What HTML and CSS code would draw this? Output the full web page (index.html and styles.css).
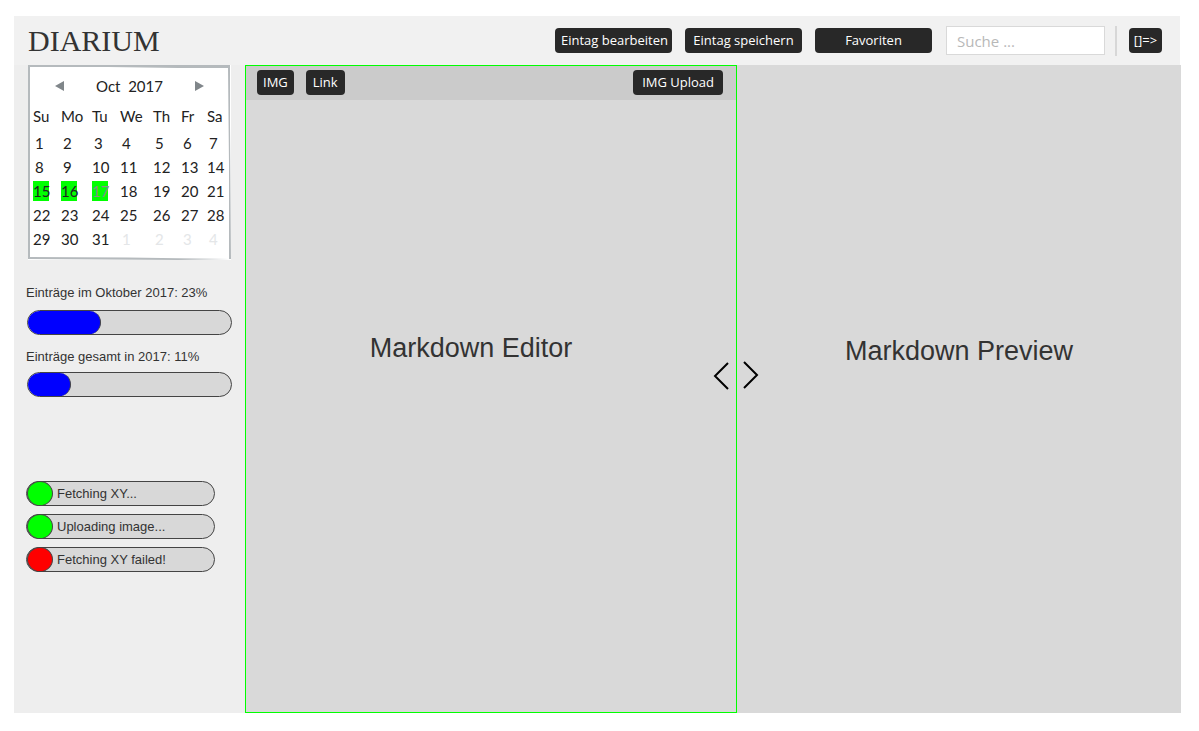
FILE: index.html
```html
<!DOCTYPE html>
<html lang="de">
<head>
<meta charset="utf-8">
<meta name="viewport" content="width=device-width, initial-scale=1">
<title>Diarium</title>
<link rel="stylesheet" href="styles.css">
</head>
<body>
<div class="app">
  <header class="topbar">
    <h1 class="logo">DIARIUM</h1>
    <nav class="actions">
      <button class="btn btn-wide" type="button">Eintag bearbeiten</button>
      <button class="btn btn-wide" type="button">Eintag speichern</button>
      <button class="btn btn-wide" type="button">Favoriten</button>
    </nav>
    <input class="search" type="search" placeholder="Suche ..." aria-label="Suche">
    <span class="divider"></span>
    <button class="btn logout" type="button" aria-label="Abmelden">[]=&gt;</button>
  </header>
  <div class="main">
    <aside class="sidebar">
      <section class="calendar">
        <div class="month">
          <button class="arrow" type="button" aria-label="Voriger Monat"><svg width="9" height="10" viewBox="0 0 9 10"><path d="M9 0V10L0 5Z"/></svg></button>
          <span class="month-name">Oct&nbsp; 2017</span>
          <button class="arrow" type="button" aria-label="Nächster Monat"><svg width="9" height="10" viewBox="0 0 9 10"><path d="M0 0V10L9 5Z"/></svg></button>
        </div>
        <table class="days">
          <colgroup><col class="c28"><col class="c31"><col class="c28"><col class="c33"><col class="c28"><col class="c26"><col></colgroup>
          <thead><tr><th>Su</th><th>Mo</th><th>Tu</th><th>We</th><th>Th</th><th>Fr</th><th>Sa</th></tr></thead>
          <tbody>
            <tr class="single"><td>1</td><td>2</td><td>3</td><td>4</td><td>5</td><td>6</td><td>7</td></tr>
            <tr><td class="one">8</td><td class="one">9</td><td>10</td><td>11</td><td>12</td><td>13</td><td>14</td></tr>
            <tr><td><span class="mark">15</span></td><td><span class="mark">16</span></td><td><span class="mark today">17</span></td><td>18</td><td>19</td><td>20</td><td>21</td></tr>
            <tr><td>22</td><td>23</td><td>24</td><td>25</td><td>26</td><td>27</td><td>28</td></tr>
            <tr><td>29</td><td>30</td><td>31</td><td class="one out">1</td><td class="one out">2</td><td class="one out">3</td><td class="one out">4</td></tr>
          </tbody>
        </table>
        <svg class="frame" viewBox="0 0 203 195" preserveAspectRatio="none" aria-hidden="true">
          <path d="M0 0H202V60L203 194L150 195L0 194ZM2 2V192L100 192.500L201 194L201 100L200 3L150 3L80 2Z" fill-rule="evenodd"/>
        </svg>
      </section>
      <section class="stats">
        <div class="stat">
          <span class="stat-label">Einträge im Oktober 2017: 23%</span>
          <div class="track"><div class="fill" style="width:36%"></div></div>
        </div>
        <div class="stat">
          <span class="stat-label">Einträge gesamt in 2017: 11%</span>
          <div class="track"><div class="fill" style="width:21%"></div></div>
        </div>
      </section>
      <ul class="jobs">
        <li class="job"><span class="dot"></span>Fetching XY...</li>
        <li class="job"><span class="dot"></span>Uploading image...</li>
        <li class="job"><span class="dot failed"></span>Fetching XY failed!</li>
      </ul>
    </aside>
    <section class="editor">
      <div class="tools">
        <button class="btn" type="button">IMG</button>
        <button class="btn link" type="button">Link</button>
        <button class="btn upload" type="button">IMG Upload</button>
      </div>
      <h2 class="title">Markdown Editor</h2>
      <button class="resize left" type="button" aria-label="Editor verkleinern"><svg width="16" height="28" viewBox="0 0 16 28"><path d="M15 1L2 14L15 27"/></svg></button>
    </section>
    <section class="preview">
      <h2 class="title">Markdown Preview</h2>
      <button class="resize right" type="button" aria-label="Vorschau verkleinern"><svg width="16" height="28" viewBox="0 0 16 28"><path d="M1 1L14 14L1 27"/></svg></button>
    </section>
  </div>
</div>
</body>
</html>
```
FILE: styles.css
```css
* { box-sizing: border-box; }
body {
  margin: 0;
  background: #fff;
  color: #333;
  font-family: "Liberation Sans", Arial, sans-serif;
  font-size: 13px;
}
button { border: 0; padding: 0; background: none; cursor: pointer; }
svg { display: block; }
.app {
  display: flex;
  flex-direction: column;
  min-height: 100vh;
  padding: 16px 18px 18px 14px;
}
.topbar {
  display: flex;
  align-items: center;
  min-height: 49px;
  padding: 0 18px 0 14px;
  margin-right: 1px;
  background: #f1f1f1;
}
.logo {
  margin: 0 auto 0 0;
  font: 400 30px/36px "Liberation Serif", "Times New Roman", serif;
}
.actions { display: flex; gap: 13px; }
.btn {
  height: 25px;
  padding: 0 6px;
  border-radius: 4px;
  background: #282828;
  color: #fff;
  font: 13px/25px "Open Sans", "Noto Sans", sans-serif;
  white-space: nowrap;
}
.btn-wide { width: 117px; }
.search {
  width: 159px;
  height: 29px;
  margin: 0 10px 0 14px;
  padding: 0 10px;
  border: 1px solid #d9d9d9;
  background: #fff;
  font: 15px "Open Sans", "Noto Sans", sans-serif;
}
.search::placeholder { color: #b8b8b8; opacity: 1; }
.divider { width: 2px; height: 30px; background: #d7d7d7; }
.logout { width: 33px; margin-left: 12px; padding: 0; }
.main { display: flex; flex: 1; }
.sidebar { flex: 0 0 231px; padding: 0 13px 0 12px; background: #eee; }
.calendar {
  position: relative;
  width: 203px;
  height: 195px;
  margin-left: 2px;
  padding: 9px 5px;
  background: #fff;
  color: #222;
  font: 15px/24px Lato, "Open Sans", sans-serif;
}
.frame { position: absolute; inset: 0; width: 100%; height: 100%; fill: #b5babd; pointer-events: none; }
.month { display: flex; align-items: center; justify-content: space-between; padding: 0 22px; }
.arrow svg { fill: #80868a; }
.days { width: 100%; table-layout: fixed; border-collapse: collapse; }
.days th, .days td { padding: 0; text-align: left; font-weight: 400; line-height: 24px; white-space: nowrap; }
.days th { padding: 6px 0 3px; }
.days .single td, .days .one { padding-left: 2px; }
.days .out { color: #e4e6e8; }
.c26 { width: 26px; }
.c28 { width: 28px; }
.c31 { width: 31px; }
.c33 { width: 33px; }
.mark { display: block; width: 16px; height: 20px; line-height: 20px; background: #0f0; }
.days .today { color: #8c8c8c; }
.stats { display: flex; flex-direction: column; gap: 14px; padding-top: 25px; }
.stat { display: flex; flex-direction: column; gap: 9px; }
.stat + .stat { gap: 7px; }
.stat-label { line-height: 16px; }
.track { width: 205px; height: 25px; margin-left: 1px; border: 1px solid #444; border-radius: 13px; background: #d8d8d8; overflow: hidden; }
.fill { height: 100%; border-right: 1px solid #444; border-radius: 12px; background: #00f; }
.jobs { display: flex; flex-direction: column; gap: 8px; margin: 84px 0 0; padding: 0; list-style: none; }
.job { display: flex; align-items: center; gap: 4px; width: 189px; height: 25px; border: 1px solid #444; border-radius: 13px; background: #d8d8d8; }
.dot { width: 26px; height: 25px; border: 1px solid #444; border-radius: 50%; background: #0f0; }
.failed { background: #f00; }
.editor { position: relative; flex: 490 1 0; border: 1px solid #0f0; background: #d9d9d9; }
.preview { position: relative; flex: 444 1 0; padding-top: 34px; background: #d9d9d9; }
.tools { display: flex; gap: 12px; padding: 4px 13px 5px 11px; background: #cbcbcb; }
.link { padding: 0 7px; }
.upload { margin-left: auto; padding: 0 9px; }
.title { margin: 232px 0 0; font-size: 27px; line-height: 32px; font-weight: 400; text-align: center; }
.editor .title { padding-right: 40px; }
.preview .title { margin-top: 236px; }
.resize { position: absolute; top: 296px; }
.resize svg { fill: none; stroke: #000; stroke-width: 2; }
.left { right: 7px; }
.right { left: 6px; }
```
